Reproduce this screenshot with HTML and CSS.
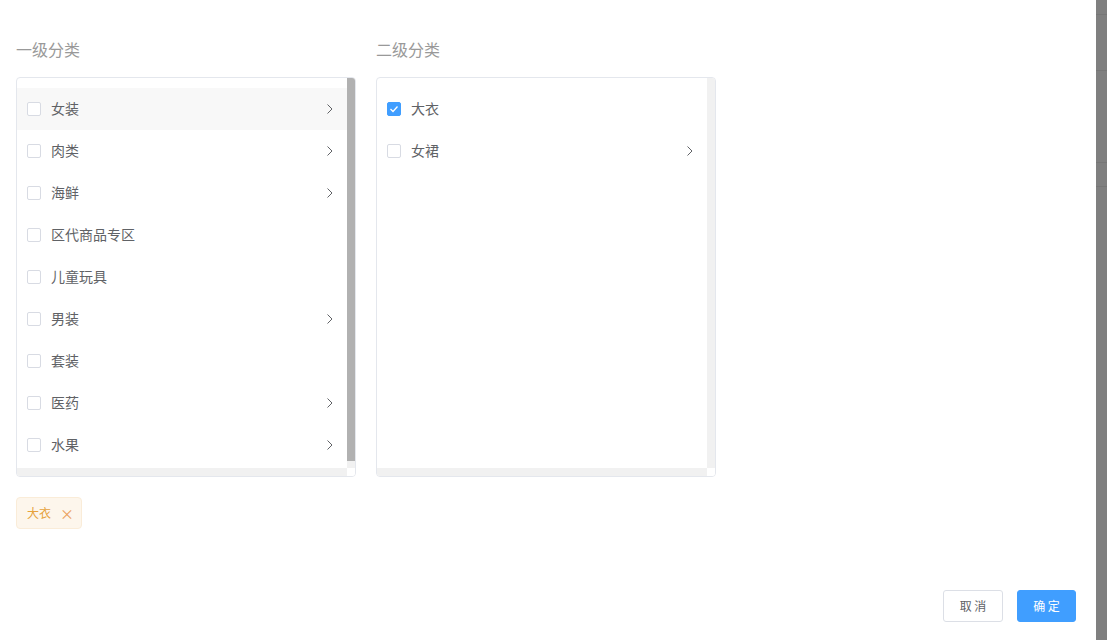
FILE: index.html
```html
<!DOCTYPE html>
<html lang="zh-CN">
<head>
    <meta charset="UTF-8">
    <meta name="viewport" content="width=device-width, initial-scale=1.0">
    <title>选择分类</title>
    <link rel="stylesheet" href="styles.css">
</head>
<body>
    <div class="page">
        <div class="dialog">
            <div class="columns">
                <div class="column">
                    <h3 class="column-title">一级分类</h3>
                    <div class="panel">
                        <div class="panel-body">
                            <ul class="node-list">
                                <li class="node active"><span class="checkbox"></span><span class="node-label">女装</span><svg class="arrow" viewBox="0 0 6 10"><polyline points="0.5,0.5 5,5 0.5,9.5"/></svg></li>
                                <li class="node"><span class="checkbox"></span><span class="node-label">肉类</span><svg class="arrow" viewBox="0 0 6 10"><polyline points="0.5,0.5 5,5 0.5,9.5"/></svg></li>
                                <li class="node"><span class="checkbox"></span><span class="node-label">海鲜</span><svg class="arrow" viewBox="0 0 6 10"><polyline points="0.5,0.5 5,5 0.5,9.5"/></svg></li>
                                <li class="node"><span class="checkbox"></span><span class="node-label">区代商品专区</span></li>
                                <li class="node"><span class="checkbox"></span><span class="node-label">儿童玩具</span></li>
                                <li class="node"><span class="checkbox"></span><span class="node-label">男装</span><svg class="arrow" viewBox="0 0 6 10"><polyline points="0.5,0.5 5,5 0.5,9.5"/></svg></li>
                                <li class="node"><span class="checkbox"></span><span class="node-label">套装</span></li>
                                <li class="node"><span class="checkbox"></span><span class="node-label">医药</span><svg class="arrow" viewBox="0 0 6 10"><polyline points="0.5,0.5 5,5 0.5,9.5"/></svg></li>
                                <li class="node"><span class="checkbox"></span><span class="node-label">水果</span><svg class="arrow" viewBox="0 0 6 10"><polyline points="0.5,0.5 5,5 0.5,9.5"/></svg></li>
                            </ul>
                        </div>
                        <div class="scroll-y"><div class="thumb" style="height: 383px;"></div></div>
                        <div class="scroll-x"></div>
                        <div class="scroll-corner"></div>
                    </div>
                </div>
                <div class="column">
                    <h3 class="column-title">二级分类</h3>
                    <div class="panel">
                        <div class="panel-body">
                            <ul class="node-list">
                                <li class="node"><span class="checkbox checked"><svg viewBox="0 0 12 12"><polyline points="2.5,6 5,8.5 9.5,3.5"/></svg></span><span class="node-label">大衣</span></li>
                                <li class="node"><span class="checkbox"></span><span class="node-label">女裙</span><svg class="arrow" viewBox="0 0 6 10"><polyline points="0.5,0.5 5,5 0.5,9.5"/></svg></li>
                            </ul>
                        </div>
                        <div class="scroll-y"></div>
                        <div class="scroll-x"></div>
                        <div class="scroll-corner"></div>
                    </div>
                </div>
            </div>
            <div class="tags">
                <span class="tag">大衣<span class="tag-close">×</span></span>
            </div>
            <div class="footer">
                <button type="button" class="btn">取 消</button>
                <button type="button" class="btn btn-primary">确 定</button>
            </div>
        </div>
        <div class="overlay">
            <div class="overlay-row" style="height: 15px;"></div>
            <div class="overlay-row" style="height: 56px;"></div>
            <div class="overlay-row" style="height: 92px;"></div>
            <div class="overlay-row" style="height: 24px;"></div>
        </div>
    </div>
</body>
</html>
```

FILE: styles.css
```css
* {
    box-sizing: border-box;
}
body {
    margin: 0;
    font-family: "Noto Sans CJK SC", "Liberation Sans", sans-serif;
    color: #606266;
    overflow: hidden;
}
.page {
    display: flex;
    width: 1107px;
    height: 640px;
}
.dialog {
    width: 1096px;
    height: 640px;
    background: #fff;
    padding: 37px 20px 18px 16px;
    display: flex;
    flex-direction: column;
}
.overlay {
    flex: 1;
    background: #7f7f7f;
}
.overlay-row {
    border-bottom: 1px solid #767676;
}
.columns {
    display: flex;
    gap: 20px;
}
.column-title {
    margin: 0 0 16px;
    font-size: 16px;
    font-weight: normal;
    line-height: 24px;
    color: #999;
}
.panel {
    width: 340px;
    height: 400px;
    border: 1px solid #e4e7ed;
    border-radius: 4px;
    overflow: hidden;
    display: grid;
    grid-template-columns: 1fr 8px;
    grid-template-rows: 1fr 8px;
}
.panel-body {
    overflow: hidden;
}
.scroll-y,
.scroll-x {
    background: #f1f1f1;
}
.thumb {
    background: #b1b1b1;
}
.scroll-corner {
    background: #fff;
}
.node-list {
    list-style: none;
    margin: 0;
    padding: 10px 0;
}
.node {
    display: flex;
    align-items: center;
    height: 42px;
    padding: 0 14px 2px 10px;
    font-size: 14px;
    cursor: pointer;
}
.node.active {
    background: #f8f8f8;
}
.checkbox {
    width: 14px;
    height: 14px;
    margin-top: 2px;
    border: 1px solid #d8dbe3;
    border-radius: 2px;
    background: #fff;
    margin-right: 10px;
    flex-shrink: 0;
    display: flex;
}
.checkbox.checked {
    background: #409eff;
    border-color: #409eff;
}
.checkbox svg {
    width: 12px;
    height: 12px;
    fill: none;
    stroke: #fff;
    stroke-width: 1.3;
}
.node-label {
    flex: 1;
    line-height: 20px;
}
.arrow {
    width: 6px;
    height: 10px;
    margin-top: 2px;
    fill: none;
    stroke: #606266;
    stroke-width: 1;
}
.tags {
    margin-top: 20px;
}
.tag {
    display: inline-flex;
    align-items: center;
    height: 32px;
    padding: 0 6px 1px 10px;
    font-size: 12px;
    color: #e6a23c;
    background: #fdf6ec;
    border: 1px solid #faecd8;
    border-radius: 4px;
}
.tag-close {
    width: 16px;
    margin-left: 8px;
    text-align: center;
    font-size: 14px;
    color: #eba15a;
}
.footer {
    margin-top: auto;
    display: flex;
    justify-content: flex-end;
    gap: 14px;
}
.btn {
    height: 32px;
    width: 60px;
    padding: 0 0 1px;
    font-family: inherit;
    font-size: 12px;
    color: #606266;
    background: #fff;
    border: 1px solid #dcdfe6;
    border-radius: 3px;
    cursor: pointer;
}
.btn-primary {
    width: 59px;
    color: #fff;
    background: #409eff;
    border-color: #409eff;
}
```
